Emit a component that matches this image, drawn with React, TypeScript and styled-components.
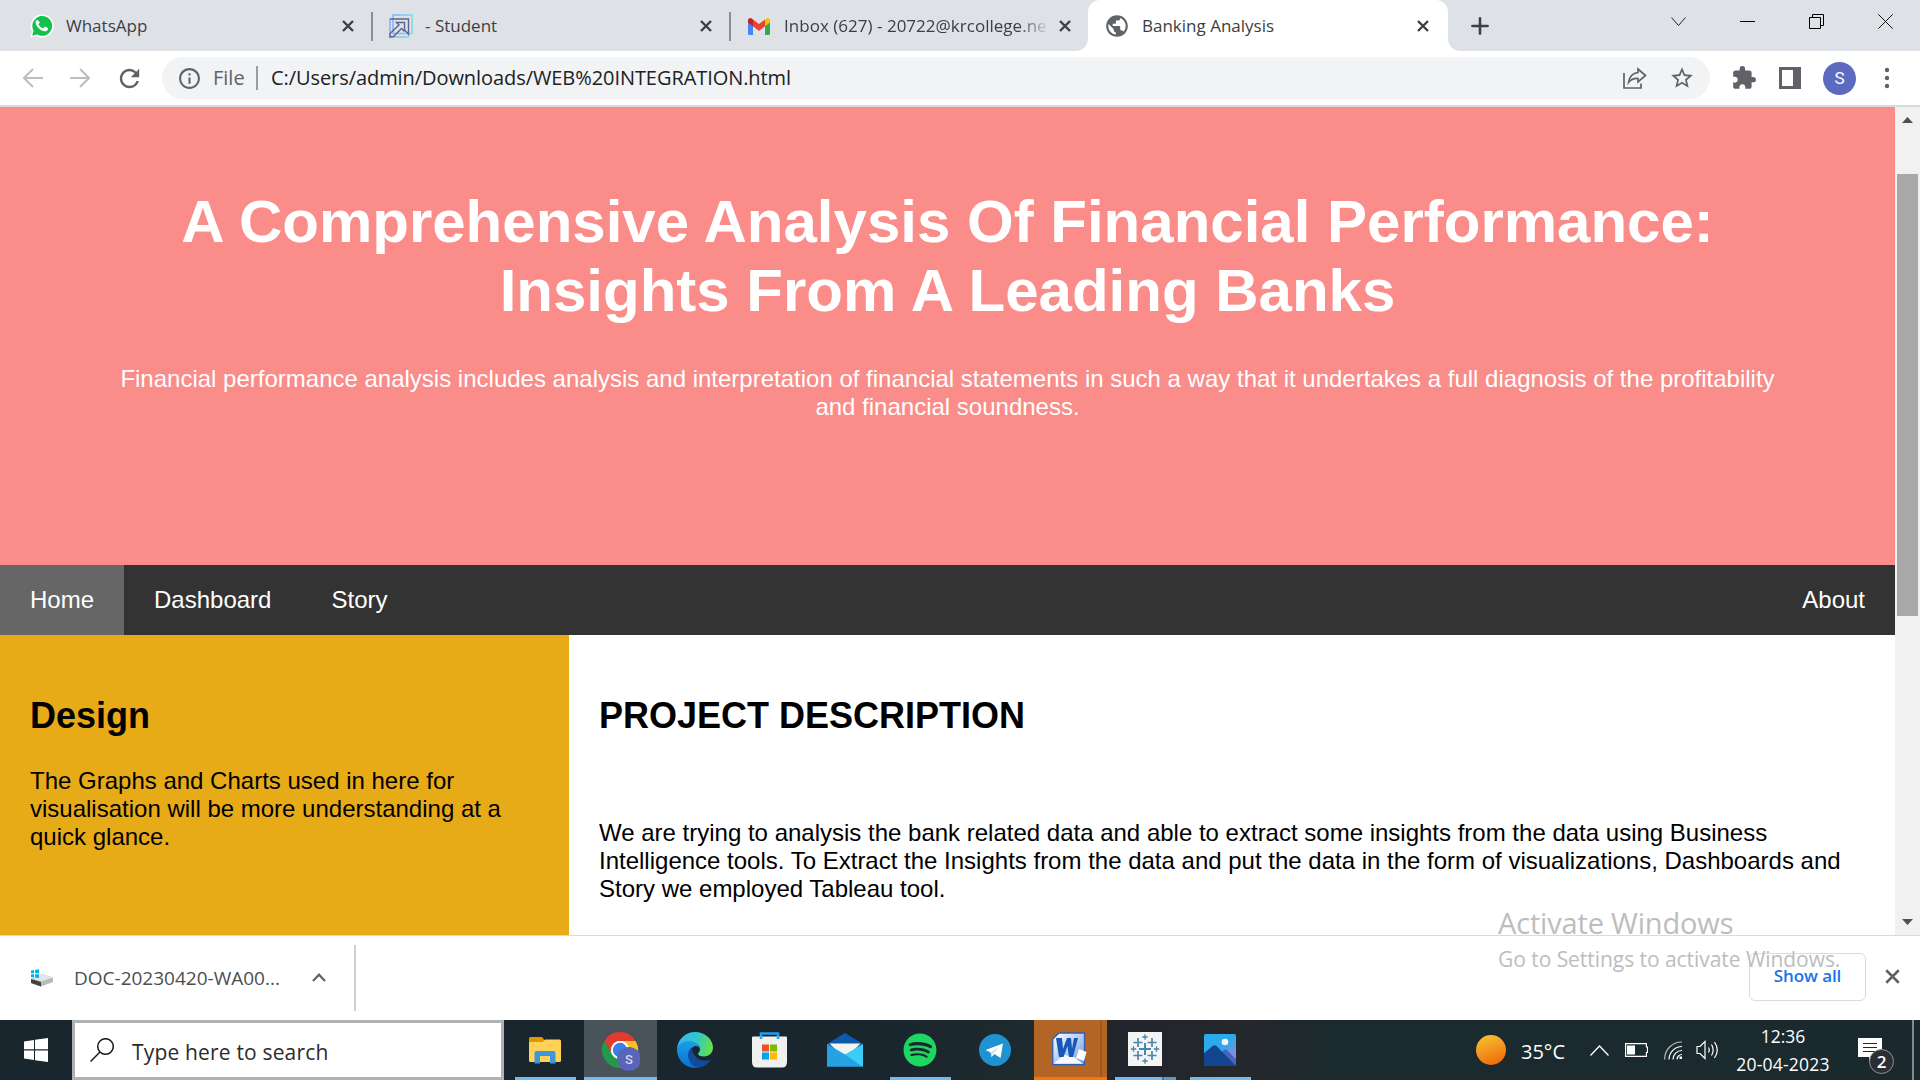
import React from "react";
import styled, { createGlobalStyle, css } from "styled-components";
import { MdRefresh, MdInfoOutline, MdStarOutline, MdExtension, MdPublic } from "react-icons/md";
import { FaSpotify } from "react-icons/fa";

const GlobalStyle = createGlobalStyle`
  *, *::before, *::after { box-sizing: border-box; }
  body { margin: 0; background: #fff; overflow: hidden; }
  svg { display: block; flex: none; }
`;

const ui = `"Open Sans", "Noto Sans", sans-serif`;
const arial = `"Liberation Sans", Arial, sans-serif`;

const Screen = styled.div`
  position: relative;
  display: grid;
  grid-template-rows: 51px 56px 828px 85px 60px;
  width: 1920px;
  height: 1080px;
  overflow: hidden;
  font-family: ${ui};
`;

const Label = styled.span<{ $size: number; $track?: number; $color?: string; $weight?: number }>`
  font-size: ${(p) => p.$size}px;
  letter-spacing: ${(p) => p.$track ?? 0}px;
  color: ${(p) => p.$color ?? "#3c4043"};
  font-weight: ${(p) => p.$weight ?? 400};
  line-height: 28px;
  white-space: nowrap;
`;

/* ---------- tab strip ---------- */
const TabStrip = styled.div`
  display: flex;
  background: #dee1e6;
`;

const Tab = styled.div<{ $width: number; $left: number; $right: number; $divider?: boolean; $active?: boolean }>`
  position: relative;
  display: flex;
  align-items: center;
  width: ${(p) => p.$width}px;
  padding: 1px ${(p) => p.$right}px 0 ${(p) => p.$left}px;
  ${(p) =>
    p.$divider &&
    css`
      &::after {
        content: "";
        position: absolute;
        right: -1px;
        top: 12px;
        width: 2px;
        height: 29px;
        background: #8a8d92;
      }
    `}
  ${(p) =>
    p.$active &&
    css`
      background: #fff;
      border-radius: 12px 12px 0 0;
      &::before,
      &::after {
        content: "";
        position: absolute;
        bottom: 0;
        width: 12px;
        height: 12px;
      }
      &::before {
        left: -12px;
        background: radial-gradient(circle at 0 0, transparent 11.5px, #fff 12.3px);
      }
      &::after {
        right: -12px;
        background: radial-gradient(circle at 12px 0, transparent 11.5px, #fff 12.3px);
      }
    `}
`;

const TabTitle = styled(Label)<{ $fade?: boolean }>`
  margin-left: 12px;
  margin-right: auto;
  ${(p) =>
    p.$fade &&
    css`
      margin-left: 14px;
      mask-image: linear-gradient(90deg, #000 89%, rgba(0, 0, 0, 0.1) 100%);
    `}
`;

const NewTab = styled.div`
  display: flex;
  align-items: center;
  width: 64px;
  padding-left: 23px;
`;

const Caption = styled.div`
  display: flex;
  align-items: flex-start;
  gap: 54px;
  margin-left: auto;
  padding: 14px 27px 0 0;
`;

const Cross = ({ size = 12, stroke = 2.4, color = "#3c4043" }) => (
  <svg width={size} height={size} viewBox="0 0 12 12">
    <path d="M1 1L11 11M11 1L1 11" stroke={color} strokeWidth={(stroke * 12) / size} fill="none" />
  </svg>
);

const WhatsAppIcon = () => (
  <svg width="24" height="24" viewBox="0 0 24 24">
    <path d="M.4 23.6L2 17.6A11.6 11.6 0 1 1 6.3 22z" fill="#fff" />
    <path d="M2.2 21.7l1.4-5A9.9 9.9 0 1 1 7.2 20.4z" fill="#12c04b" />
    <path
      d="M8.2 6.4c-.3-.5-.6-.5-.9-.5-.6 0-1.7.7-1.7 2.5 0 1.8 1.2 3.5 1.5 3.8 1.7 2.5 3.9 4.2 7 5 1.8.3 3.6-.8 3.8-2 .2-.8.2-1.1 0-1.2l-2.6-1.3c-.4-.2-.6-.1-.8.2l-1 1.3c-.2.2-.4.2-.7.1-1.9-.8-3.2-2-4.2-3.7-.1-.3 0-.5.1-.6l.9-1.2c.1-.2.1-.4 0-.6z"
      fill="#fff"
    />
  </svg>
);

const StudentIcon = () => (
  <svg width="24" height="24" viewBox="0 0 24 24" fill="none">
    <defs>
      <linearGradient id="stu" x1="0" x2="1">
        <stop offset="0" stopColor="#8fb0f5" />
        <stop offset="1" stopColor="#7fdbe8" />
      </linearGradient>
    </defs>
    <rect x="4" y="1" width="19" height="18.5" stroke="url(#stu)" strokeWidth="1.6" />
    <path d="M1 4.5V23H19.5V19.5" stroke="url(#stu)" strokeWidth="1.6" />
    <path d="M1 5H19.5V20L15.500 16V8.500H7.500L10 11L1 19.500V23L4.500 22.500L12.500 14.500L15.500 17.500" stroke="#5a6490" strokeWidth="1.4" />
  </svg>
);

const GmailIcon = () => (
  <svg width="22" height="17" viewBox="0 0 22 17">
    <path d="M0 3v12.5A1.5 1.5 0 0 0 1.5 17H5V6z" fill="#4285f4" />
    <path d="M22 3v12.5a1.5 1.5 0 0 1-1.5 1.5H17V6z" fill="#34a853" />
    <path d="M17 1.5V8.3l5-3.800V2.5C22 .3 19.6-.7 18 .7z" fill="#fbbc04" />
    <path d="M5 8.3V1.5l6 4.6 6-4.6v6.800l-6 4.6z" fill="#ea4335" />
    <path d="M0 2.5v2l5 3.800V1.5L4 .7C2.4-.7 0 .3 0 2.5z" fill="#c5221f" />
  </svg>
);

/* ---------- toolbar ---------- */
const Toolbar = styled.div`
  display: flex;
  align-items: center;
  height: 56px;
  padding: 0 24px 0 23px;
  background: #fff;
  border-bottom: 2px solid #d9dadc;
`;

const NavButtons = styled.div`
  display: flex;
  align-items: center;
  gap: 27px;
  width: 139px;
`;

const ReloadSlot = styled.div`
  margin-left: -2px;
`;

const Omnibox = styled.div`
  display: flex;
  align-items: center;
  width: 1548px;
  height: 42px;
  padding: 0 15px;
  border-radius: 21px;
  background: #f1f3f4;
`;

const Scheme = styled(Label)`
  width: 43px;
  margin-left: 11px;
`;

const Rule = styled.div`
  width: 2px;
  height: 24px;
  margin-right: 13px;
  background: #9a9da1;
`;

const OmniActions = styled.div`
  display: flex;
  align-items: center;
  gap: 22px;
  margin-left: auto;
`;

const Extensions = styled.div`
  display: flex;
  align-items: center;
  gap: 22px;
  margin-left: auto;
`;

const Avatar = styled.div`
  display: grid;
  place-items: center;
  width: 33px;
  height: 33px;
  border-radius: 50%;
  background: #5c6bc0;
  color: #fff;
  font: 400 17px/33px Roboto, sans-serif;
`;

const BackArrow = ({ flip = false }) => (
  <svg width="20" height="20" viewBox="0 0 20 20" fill="none" stroke="#bcbec1" strokeWidth="2">
    <path d={flip ? "M0 10H18.5M10 1L19 10L10 19" : "M20 10H1.5M10 1L1 10L10 19"} />
  </svg>
);

const ShareIcon = () => (
  <svg width="24" height="22" viewBox="0 0 24 22" fill="none" stroke="#5f6368" strokeWidth="1.7">
    <path d="M1 6V21H18V16.5" />
    <path d="M15 2L22.5 8.5L15 15V11.5C11 11.2 8 12.5 5.5 15.5C6.3 10 9.5 6.2 15 5.5Z" />
  </svg>
);

/* ---------- page ---------- */
const Viewport = styled.div`
  display: grid;
  grid-template-columns: 1895px 25px;
  height: 828px;
  overflow: hidden;
`;

const Page = styled.div`
  display: grid;
  grid-template-rows: 458px 70px 300px;
  font-family: ${arial};
  font-size: 24px;
  line-height: 28px;
  color: #000;
`;

const Hero = styled.header`
  padding: 80px 120px 0;
  background: #fa8c89;
  color: #fff;
  text-align: center;
`;

const HeroTitle = styled.h1`
  margin: 0 0 40px;
  font-size: 60px;
  line-height: 69px;
  font-weight: 700;
`;

const Para = styled.p`
  margin: 0;
`;

const NavBar = styled.nav`
  display: flex;
  background: #333;
`;

const NavLink = styled.a<{ $active?: boolean; $end?: boolean }>`
  padding: 21px 30px;
  color: #fff;
  background: ${(p) => (p.$active ? "#666" : "transparent")};
  margin-left: ${(p) => (p.$end ? "auto" : "0")};
`;

const Columns = styled.div`
  display: grid;
  grid-template-columns: 569px 1fr;
`;

const Column = styled.section<{ $bg: string; $gap: number }>`
  padding: 60px 30px 0;
  background: ${(p) => p.$bg};
  h2 {
    margin: 0 0 ${(p) => p.$gap}px;
    font-size: 36px;
    line-height: 41px;
  }
`;

const Scrollbar = styled.div`
  display: flex;
  flex-direction: column;
  align-items: center;
  padding: 10px 0;
  background: #f1f1f1;
`;

const Thumb = styled.div`
  width: 21px;
  height: 442px;
  margin: 51px 0 auto;
  background: #a8a8a8;
`;

/* ---------- download shelf ---------- */
const Shelf = styled.div`
  display: flex;
  align-items: center;
  padding: 0 20px 0 30px;
  background: #fff;
  border-top: 1px solid #d9dadc;
`;

const Download = styled.div`
  display: flex;
  align-items: center;
  width: 326px;
  height: 66px;
  border-right: 2px solid #cdced0;
`;

const FileName = styled(Label)`
  width: 238px;
  margin-left: 21px;
`;

const ShelfActions = styled.div`
  display: flex;
  align-items: center;
  gap: 19px;
  margin-left: auto;
  padding-bottom: 3px;
`;

const ShowAll = styled.button`
  width: 117px;
  height: 48px;
  padding: 0 0 1px;
  border: 1px solid #dadce0;
  border-radius: 6px;
  background: #fff;
  font-family: ${ui};
`;

const Watermark = styled.div`
  position: absolute;
  left: 1498px;
  top: 909px;
  display: flex;
  flex-direction: column;
  gap: 8px;
`;

/* ---------- taskbar ---------- */
const Taskbar = styled.div`
  display: flex;
  background: linear-gradient(90deg, #1a262d 0, #1a262d 880px, #1d2a2e 1030px, #22252c 1110px, #24272b 1250px, #1b2a2e 1330px, #1a2a2e 1800px, #1b282e 100%);
`;

const Start = styled.div`
  display: grid;
  place-items: center;
  width: 72px;
`;

const Search = styled.div`
  display: flex;
  align-items: center;
  gap: 18px;
  width: 432px;
  padding: 0 15px;
  background: #fff;
  border: 3px solid #b2b2b2;
`;

const SearchText = styled(Label)`
  padding-top: 3px;
`;

const Apps = styled.div`
  display: flex;
  gap: 2px;
  margin-left: 5px;
`;

const AppButton = styled.div<{ $bg?: string; $line?: string; $wide?: boolean }>`
  display: flex;
  flex-direction: column;
  align-items: center;
  justify-content: space-between;
  width: 73px;
  height: 60px;
  background: ${(p) => p.$bg ?? "transparent"};
  &::after {
    content: "";
    width: ${(p) => (p.$wide ? 73 : 61)}px;
    height: 3px;
    background: ${(p) => p.$line ?? "transparent"};
  }
`;

const IconBox = styled.div`
  display: grid;
  place-items: center;
  height: 57px;
  padding: 3px 2px 0 0;
`;

const Tray = styled.div`
  display: flex;
  align-items: center;
  margin-left: 219px;
  width: 444px;
`;

const TrayItem = styled.div<{ $width: number; $top?: number }>`
  display: flex;
  align-items: center;
  width: ${(p) => p.$width}px;
  padding-top: ${(p) => p.$top ?? 0}px;
`;

const Sun = styled.div`
  width: 30px;
  height: 30px;
  border-radius: 50%;
  background: linear-gradient(160deg, #f6bd2f 10%, #f0700e 85%);
`;

const Clock = styled.div`
  display: flex;
  flex-direction: column;
  align-items: center;
  width: 94px;
  margin-right: 28px;
`;

const Edge = styled.div`
  width: 2px;
  height: 60px;
  margin-left: auto;
  margin-right: 6px;
  background: #83898d;
`;

const ExplorerIcon = () => (
  <svg width="32" height="27" viewBox="0 0 32 27">
    <path d="M0 1.5Q0 0 1.5 0H13L15 2.5V6H0z" fill="#dd9a00" />
    <path d="M0 5H13.5L16 2.5H30.5Q32 2.5 32 4V23.5Q32 25 30.5 25H1.5Q0 25 0 23.5z" fill="#ffd257" />
    <path d="M5.5 26.5V16Q5.5 14 7.5 14H24.5Q26.5 14 26.5 16V26.5H21V19H11V26.5z" fill="#3b98dc" />
  </svg>
);

const ChromeIcon = () => (
  <svg width="40" height="44" viewBox="-1 -4 40 44">
    <circle cx="19" cy="18" r="10" fill="#fff" />
    <path d="M3.400 9A18 18 0 0 1 34.6 9H19A9 9 0 0 0 11.2 22.5z" fill="#e33b2e" />
    <path d="M34.6 9A18 18 0 0 1 19 36L26.8 22.5A9 9 0 0 0 19 9z" fill="#fcc31e" />
    <path d="M19 36A18 18 0 0 1 3.4 9L11.2 22.5A9 9 0 0 0 26.8 22.5z" fill="#24994a" />
    <circle cx="19" cy="18" r="9" fill="#fff" />
    <circle cx="19" cy="18" r="7.2" fill="#3a7ee8" />
    <circle cx="28" cy="27" r="12" fill="#5865b8" />
    <text x="28" y="31.500" textAnchor="middle" fontFamily="Roboto" fontWeight="500" fontSize="13" fill="#d4d8f2">S</text>
  </svg>
);

const EdgeIcon = () => (
  <svg width="36" height="36" viewBox="0 0 36 36">
    <defs>
      <linearGradient id="e1" x1="0" y1="0.3" x2="1" y2="0.5">
        <stop offset="0" stopColor="#35b6f0" />
        <stop offset=".5" stopColor="#30c6d0" />
        <stop offset="1" stopColor="#66e04a" />
      </linearGradient>
      <linearGradient id="e2" x1="0" y1="0" x2="0" y2="1">
        <stop offset="0" stopColor="#1ba0e6" />
        <stop offset="1" stopColor="#0a6fd0" />
      </linearGradient>
    </defs>
    <path d="M0 17A18 18 0 0 1 18 0C28 0 36 7.5 36 15.5C36 21 32 24.5 27 24.5C23.5 24.5 21 23.5 21 22C21 21 23 20 23 17C23 13 19 10 13 10C6 10 1 13.5 0 17z" fill="url(#e1)" />
    <path d="M0 18C0 13 5 9 12 9C19 9 23 13 23 17C22 14.5 19.5 13.5 17 14.5C11 17 10 27 20 33L21 35.7A18 18 0 0 1 0 18z" fill="url(#e2)" />
    <path d="M15 15.2C9 19 9.5 31 20 35.9C27 35 31.5 31.5 33.7 27.4C30 29 24 29.5 19.5 25.5C16 22 14.5 18 15 15.2z" fill="#114c9c" />
  </svg>
);

const StoreIcon = () => (
  <svg width="35" height="36" viewBox="0 0 35 36">
    <path d="M9 7V1.5H26V7" fill="none" stroke="#1ba1f2" strokeWidth="2.5" />
    <path d="M0 5.5Q0 4.500 1 4.500H34Q35 4.5 35 5.5V30Q35 35.5 30 35.5H5Q0 35.5 0 30z" fill="#f0f0f0" />
    <path d="M9 4.5V7M26 4.5V7" stroke="#1ba1f2" strokeWidth="2.5" />
    <rect x="10" y="12.5" width="7" height="7" fill="#f04f24" />
    <rect x="18" y="12.5" width="7" height="7" fill="#7fb900" />
    <rect x="10" y="20.5" width="7" height="7" fill="#00a3ee" />
    <rect x="18" y="20.5" width="7" height="7" fill="#ffb800" />
  </svg>
);

const MailIcon = () => (
  <svg width="36" height="34" viewBox="0 0 36 34">
    <path d="M0 11L18 0L36 11L18 24z" fill="#0a5cab" />
    <path d="M2.5 10.5H33.5L18 26z" fill="#f4f4f5" />
    <path d="M0 11L36 33.5H0z" fill="#27a4e6" />
    <path d="M36 11V33.5H34.5L17 22z" fill="#3ccdf5" />
    <path d="M0 11V33.5H35L18 21.5z" fill="#25a1e4" />
  </svg>
);

const TelegramIcon = () => (
  <svg width="32" height="32" viewBox="0 0 32 32">
    <circle cx="16" cy="16" r="16" fill="#1f93d2" />
    <path d="M6.5 16L24 9.5L21.5 24L15.5 20L12.5 23L11.5 18.5z" fill="#fff" />
    <path d="M11.5 18.5L20.5 12.5L13.7 19.7L12.5 23z" fill="#c9dcea" />
  </svg>
);

const WordIcon = () => (
  <svg width="35" height="36" viewBox="0 0 35 36">
    <defs>
      <linearGradient id="w1" x1="0" y1="0" x2="1" y2="1">
        <stop offset="0" stopColor="#fff" />
        <stop offset=".5" stopColor="#b7cdf3" />
        <stop offset="1" stopColor="#6d95dc" />
      </linearGradient>
    </defs>
    <path d="M7 1H32.5V32.500H.8V7z" fill="url(#w1)" stroke="#2f5fb5" strokeWidth="1.3" />
    <path d="M1.5 31.800L12 23L22 25L31 31.800z" fill="#f8faff" />
    <path d="M27 17L34.5 20L32 29L24 26z" fill="#fff" />
    <path d="M4 6H10L11 17L15 6H19L20 17L22 6H26L21 25H17L15.5 14L11.5 25H7z" fill="#1558b8" />
  </svg>
);

const plus = (x: number, y: number, r: number) => `M${x - r} ${y}H${x + r}M${x} ${y - r}V${y + r}`;

const TableauIcon = () => (
  <svg width="34" height="36" viewBox="0 0 34 36" fill="none" stroke="#4a86ab">
    <rect width="34" height="34" fill="#f4f4f4" stroke="none" />
    <path d={plus(17, 17, 6)} strokeWidth="2" />
    <path d={plus(10, 10.5, 4.5) + plus(24, 10.5, 4.5) + plus(10, 23.5, 4.5) + plus(24, 23.5, 4.5)} strokeWidth="1.7" />
    <path d={plus(17, 5, 2.7) + plus(17, 29, 2.7) + plus(5.5, 17, 2.7) + plus(28.5, 17, 2.7)} strokeWidth="1.3" />
  </svg>
);

const PhotosIcon = () => (
  <svg width="32" height="32" viewBox="0 0 32 32">
    <defs>
      <clipPath id="ph">
        <rect width="32" height="32" rx="1.5" />
      </clipPath>
      <linearGradient id="p1" x1="0" y1="0" x2="1" y2="1">
        <stop offset=".5" stopColor="#2cabea" />
        <stop offset="1" stopColor="#c77ad8" />
      </linearGradient>
    </defs>
    <g clipPath="url(#ph)">
      <rect width="32" height="32" fill="url(#p1)" />
      <path d="M10 25L20 16Q21.5 14.5 23 16L33 26V33H10z" fill="#4a62c0" />
      <path d="M-1 20L8.500 12Q10.5 10.5 12.5 12L33 33H-1z" fill="#12478f" />
      <circle cx="21" cy="8" r="3.3" fill="#f3f6f8" />
    </g>
  </svg>
);

const WifiIcon = () => (
  <svg width="19" height="19" viewBox="0 0 19 19" fill="none" stroke="#fff" strokeWidth="1.2">
    <path d="M.7 18.5A17 17 0 0 1 18 1" opacity=".7" />
    <path d="M5 18.5A13 13 0 0 1 18 5.5" />
    <path d="M9 18.5A9 9 0 0 1 18 9.5" />
    <path d="M13 18.5A5 5 0 0 1 18 13.5" />
    <rect x="15.5" y="15.5" width="2.5" height="2.5" fill="#fff" stroke="none" />
  </svg>
);

const SpeakerIcon = () => (
  <svg width="23" height="20" viewBox="0 0 23 20" fill="none" stroke="#fff" strokeWidth="1.2">
    <path d="M1 6.5H4L9 1.5V18.5L4 13.5H1z" />
    <path d="M12.5 7.5Q14 10 12.5 12.5M15.5 4.5Q18.8 10 15.5 15.5M18.5 2Q24 10 18.5 18" />
  </svg>
);

const NoticeIcon = () => (
  <svg width="38" height="38" viewBox="0 0 38 38">
    <path d="M0 1H24V20H16L11 25V20H0z" fill="#fff" />
    <path d="M5 6.5H19M5 10.5H19M5 14.5H19" stroke="#1b282e" strokeWidth="1.2" />
    <circle cx="23.5" cy="24.5" r="12" fill="#2b2f33" stroke="#8d9194" />
    <text x="23.5" y="30.5" textAnchor="middle" fontFamily="Open Sans" fontWeight="600" fontSize="17" fill="#fff">2</text>
  </svg>
);

export default function App() {
  return (
    <Screen>
      <GlobalStyle />
      <TabStrip>
        <Tab $width={372} $left={30} $right={18} $divider>
          <WhatsAppIcon />
          <TabTitle $size={17}>WhatsApp</TabTitle>
          <Cross />
        </Tab>
        <Tab $width={358} $left={17} $right={18} $divider>
          <StudentIcon />
          <TabTitle $size={17}>- Student</TabTitle>
          <Cross />
        </Tab>
        <Tab $width={358} $left={18} $right={17}>
          <GmailIcon />
          <TabTitle $size={17} $track={0.02} $fade>Inbox (627) - 20722@krcollege.ne</TabTitle>
          <Cross />
        </Tab>
        <Tab $width={360} $left={16} $right={19} $active>
          <MdPublic size={26} color="#5f6368" />
          <TabTitle $size={17}>Banking Analysis</TabTitle>
          <Cross />
        </Tab>
        <NewTab>
          <svg width="18" height="18" viewBox="0 0 18 18" stroke="#3c4043" strokeWidth="2.6" strokeLinecap="round">
            <path d="M9 1.4V16.6M1.4 9H16.6" />
          </svg>
        </NewTab>
        <Caption>
          <svg width="15" height="15" viewBox="0 0 15 15" fill="none" stroke="#222"><path d="M.5 3.5L7.5 11.5L14.5 3.5" /></svg>
          <svg width="15" height="15" viewBox="0 0 15 15"><path d="M0 7.5H15" stroke="#000" /></svg>
          <svg width="15" height="15" viewBox="0 0 15 15" fill="none" stroke="#000"><path d="M.5 3.5H11.5V14.5H.5zM3.5 3.5V.5H14.5V11.5H11.5" /></svg>
          <svg width="15" height="15" viewBox="0 0 15 15" stroke="#111"><path d="M.3 .3L14.7 14.7M14.7 .3L.3 14.7" /></svg>
        </Caption>
      </TabStrip>

      <Toolbar>
        <NavButtons>
          <BackArrow />
          <BackArrow flip />
          <ReloadSlot><MdRefresh size={29} color="#5f6368" /></ReloadSlot>
        </NavButtons>
        <Omnibox>
          <MdInfoOutline size={25} color="#5f6368" />
          <Scheme $size={20} $color="#5f6368">File</Scheme>
          <Rule />
          <Label $size={20} $track={-0.07} $color="#202124">C:/Users/admin/Downloads/WEB%20INTEGRATION.html</Label>
          <OmniActions>
            <ShareIcon />
            <MdStarOutline size={26} color="#5f6368" />
          </OmniActions>
        </Omnibox>
        <Extensions>
          <MdExtension size={26} color="#5f6368" />
          <svg width="22" height="22" viewBox="0 0 22 22"><path d="M0 0H22V22H0zM3 3V19H14V3z" fill="#5f6368" fillRule="evenodd" /></svg>
          <Avatar>S</Avatar>
          <svg width="18" height="22" viewBox="0 0 18 22" fill="#5f6368"><circle cx="9" cy="3" r="2.2" /><circle cx="9" cy="11" r="2.2" /><circle cx="9" cy="19" r="2.2" /></svg>
        </Extensions>
      </Toolbar>

      <Viewport>
        <Page>
          <Hero>
            <HeroTitle>A Comprehensive Analysis Of Financial Performance: Insights From A Leading Banks</HeroTitle>
            <Para>
              Financial performance analysis includes analysis and interpretation of financial statements in such a way that it
              undertakes a full diagnosis of the profitability and financial soundness.
            </Para>
          </Hero>
          <NavBar>
            <NavLink $active>Home</NavLink>
            <NavLink>Dashboard</NavLink>
            <NavLink>Story</NavLink>
            <NavLink $end>About</NavLink>
          </NavBar>
          <Columns>
            <Column $bg="#e8ab18" $gap={31}>
              <h2>Design</h2>
              <Para>The Graphs and Charts used in here for visualisation will be more understanding at a quick glance.</Para>
            </Column>
            <Column $bg="#fff" $gap={83}>
              <h2>PROJECT DESCRIPTION</h2>
              <Para>
                We are trying to analysis the bank related data and able to extract some insights from the data using Business
                Intelligence tools. To Extract the Insights from the data and put the data in the form of visualizations,
                Dashboards and Story we employed Tableau tool.
              </Para>
            </Column>
          </Columns>
        </Page>
        <Scrollbar>
          <svg width="11" height="6" viewBox="0 0 11 6"><path d="M0 6L5.5 0L11 6z" fill="#505050" /></svg>
          <Thumb />
          <svg width="11" height="6" viewBox="0 0 11 6"><path d="M0 0H11L5.5 6z" fill="#505050" /></svg>
        </Scrollbar>
      </Viewport>

      <Shelf>
        <Download>
          <svg width="23" height="18" viewBox="0 0 23 18">
            <path d="M1 10L12 5L23 8.5V13L11 17.5L1 14z" fill="#b9babc" />
            <path d="M1 9.500L12 5L23 8.5L11 12.5z" fill="#e3e4e5" />
            <path d="M1 10L11 13V17.5L1 14z" fill="#3d4441" />
            <path d="M1 1.5L4 1V4.3H1zM5 .9L9 .3V4.3H5zM1 5.2H4V8.5L1 8.2zM5 5.2H9V9L5 8.6z" fill="#00b4f0" />
          </svg>
          <FileName $size={19} $color="#4b4e52">DOC-20230420-WA00...</FileName>
          <svg width="14" height="11" viewBox="0 0 14 11" fill="none" stroke="#5f6368" strokeWidth="2.2"><path d="M1 8L7 1.7L13 8" /></svg>
        </Download>
        <ShelfActions>
          <ShowAll><Label $size={17} $weight={600} $track={-0.1} $color="#1a73e8">Show all</Label></ShowAll>
          <Cross size={15} stroke={2.6} color="#5f6368" />
        </ShelfActions>
      </Shelf>

      <Taskbar>
        <Start>
          <svg width="24" height="24" viewBox="0 0 24 24" fill="#fff">
            <path d="M0 3.4L10 2V11.3H0zM11 1.8L24 0V11.3H11zM0 12.4H10V22L0 20.6zM11 12.4H24V24L11 22.2z" />
          </svg>
        </Start>
        <Search>
          <svg width="24" height="24" viewBox="0 0 24 24" fill="none" stroke="#1a1a1a" strokeWidth="1.5"><circle cx="15.5" cy="8.5" r="7.8" /><path d="M10 14L.5 23.5" /></svg>
          <SearchText $size={21} $track={0.17} $color="#2b2b2b">Type here to search</SearchText>
        </Search>
        <Apps>
          <AppButton $line="#76b9ed"><IconBox><ExplorerIcon /></IconBox></AppButton>
          <AppButton $line="#76b9ed" $wide $bg="#48535a"><IconBox><ChromeIcon /></IconBox></AppButton>
          <AppButton><IconBox><EdgeIcon /></IconBox></AppButton>
          <AppButton><IconBox><StoreIcon /></IconBox></AppButton>
          <AppButton><IconBox><MailIcon /></IconBox></AppButton>
          <AppButton $line="#76b9ed"><IconBox><FaSpotify size={34} color="#1ed760" /></IconBox></AppButton>
          <AppButton><IconBox><TelegramIcon /></IconBox></AppButton>
          <AppButton $line="#ff7200" $wide $bg="linear-gradient(90deg, #b36526 0 66px, #a2561b 66px 68px, #b36526 68px)"><IconBox><WordIcon /></IconBox></AppButton>
          <AppButton $line="linear-gradient(90deg, #76b9ed 0 47px, #4d7796 47px 49px, #6496bd 49px)"><IconBox><TableauIcon /></IconBox></AppButton>
          <AppButton $line="#76b9ed"><IconBox><PhotosIcon /></IconBox></AppButton>
        </Apps>
        <Tray>
          <TrayItem $width={45}><Sun /></TrayItem>
          <TrayItem $width={69} $top={4}><Label $size={20} $color="#fff">35°C</Label></TrayItem>
          <TrayItem $width={35}><svg width="19" height="11" viewBox="0 0 19 11" fill="none" stroke="#fff" strokeWidth="1.3"><path d="M.5 10.5L9.5 1L18.5 10.5" /></svg></TrayItem>
          <TrayItem $width={39}><svg width="23" height="14" viewBox="0 0 23 14"><path d="M.6 .6H21.4V4H22.5V9.5H21.4V13.4H.6z" fill="none" stroke="#fff" strokeWidth="1.2" /><rect x="2" y="2.5" width="8" height="9" fill="#fff" /></svg></TrayItem>
          <TrayItem $width={32}><WifiIcon /></TrayItem>
          <TrayItem $width={40}><SpeakerIcon /></TrayItem>
          <Clock>
            <Label $size={17.5} $color="#fff">12:36</Label>
            <Label $size={17.5} $track={0.2} $color="#fff">20-04-2023</Label>
          </Clock>
          <TrayItem $width={40} $top={12}><NoticeIcon /></TrayItem>
          <Edge />
        </Tray>
      </Taskbar>

      <Watermark>
        <Label $size={29} $track={-0.17} $color="#bdbdbd">Activate Windows</Label>
        <Label $size={21} $track={-0.05} $color="#bdbdbd">Go to Settings to activate Windows.</Label>
      </Watermark>
    </Screen>
  );
}
